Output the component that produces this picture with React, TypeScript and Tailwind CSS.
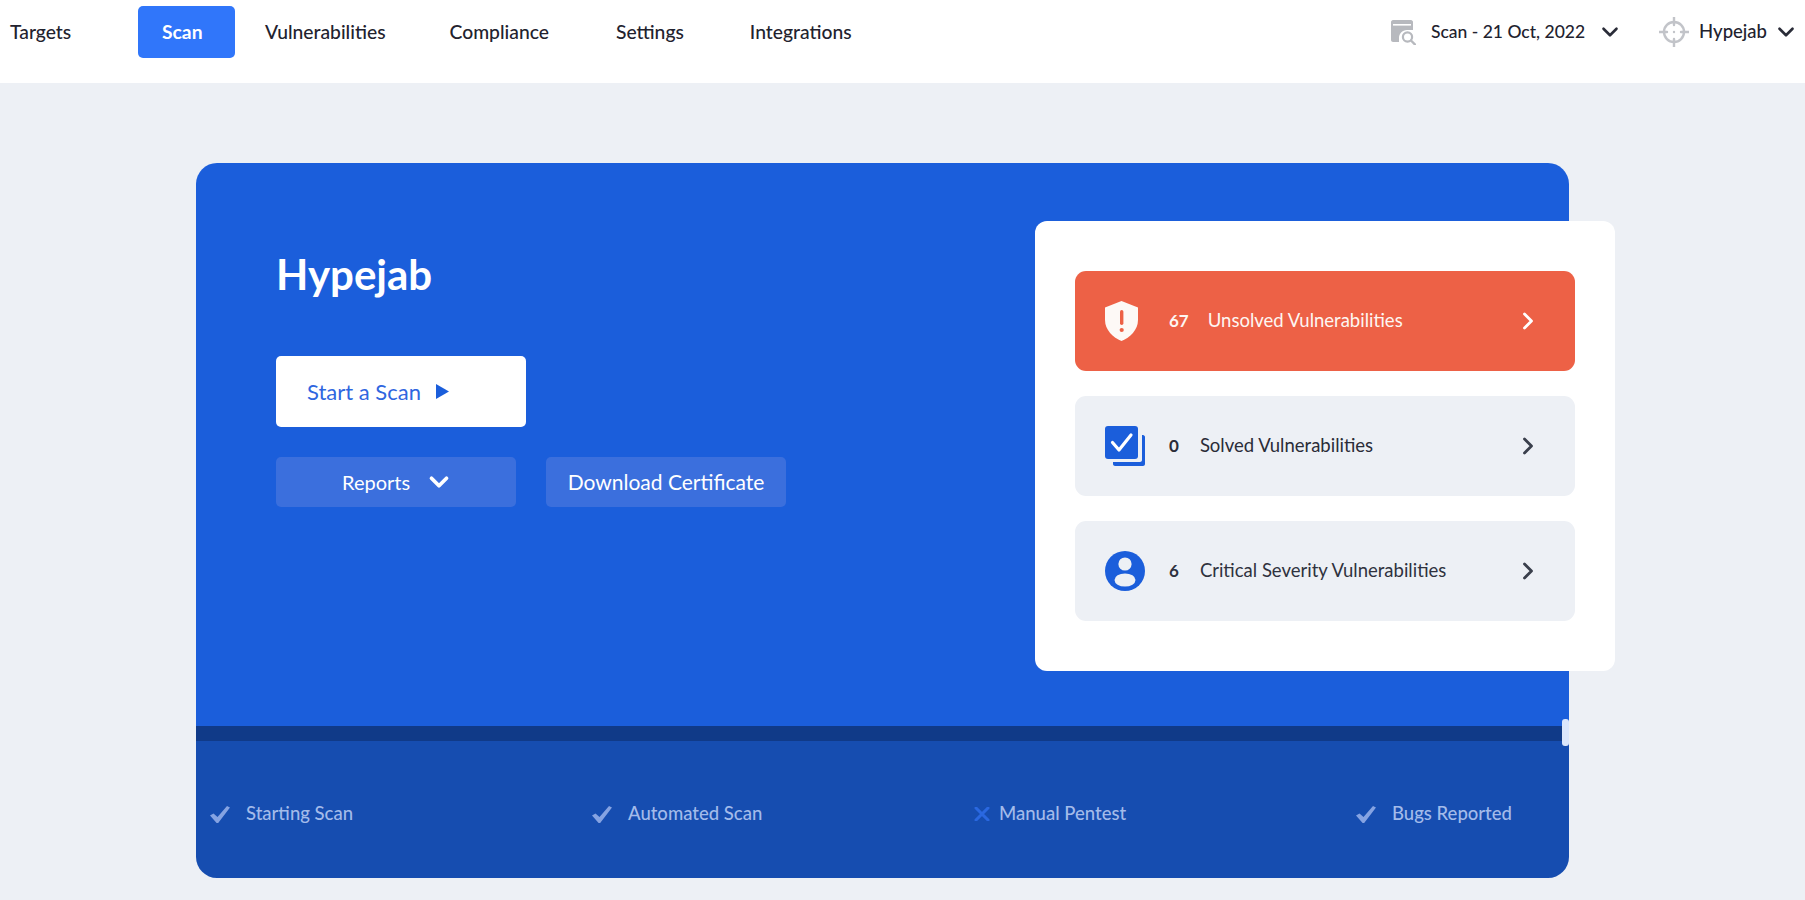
import { ChevronDown, ChevronRight } from "lucide-react";

const font = { fontFamily: "Lato, sans-serif" };

function ShieldIcon() {
    return (
        <svg width="33" height="40" viewBox="0 0 33 40" className="shrink-0">
            <path d="M16.5 0 L33 6.5 V19 C33 29 25 36.5 16.5 40 C8 36.5 0 29 0 19 V6.5 Z" fill="#fdf9f6" />
            <rect x="15" y="9" width="3.4" height="15" rx="1.7" fill="#ed6146" />
            <circle cx="16.7" cy="29" r="2.1" fill="#ed6146" />
        </svg>
    );
}

function SolvedIcon() {
    return (
        <svg width="40" height="40" viewBox="0 0 40 40" className="shrink-0">
            <path d="M37 9 V34 C37 35 36 36 35 36 H8 V38 C8 39 9 40 10 40 H38 C39 40 40 39 40 38 V11 C40 10 39 9 38 9 Z" fill="#1b5edb" />
            <rect x="0" y="0" width="33" height="33" rx="3" fill="#1b5edb" />
            <path d="M7.5 16.5 L14 24 L26 9" fill="none" stroke="#fff" strokeWidth="3.2" strokeLinecap="round" strokeLinejoin="round" />
        </svg>
    );
}

function PersonIcon() {
    return (
        <svg width="40" height="40" viewBox="0 0 40 40" className="shrink-0">
            <circle cx="20" cy="20" r="20" fill="#1b5edb" />
            <circle cx="20" cy="13" r="6.6" fill="#edf0f5" />
            <ellipse cx="20" cy="29" rx="10.5" ry="6.6" fill="#edf0f5" />
        </svg>
    );
}

function ScanDateIcon() {
    return (
        <svg width="25" height="25" viewBox="0 0 25 25" className="shrink-0">
            <path d="M2 0 H20 C21 0 22 1 22 2 V10 H16 C11 10 8 14 8 18 V22 H2 C1 22 0 21 0 20 V2 C0 1 1 0 2 0 Z" fill="#b7b9be" />
            <rect x="2" y="4" width="18" height="1.6" fill="#fff" />
            <circle cx="16.5" cy="17" r="4.6" fill="none" stroke="#b7b9be" strokeWidth="2.2" />
            <path d="M20 20.5 L24 24.5" stroke="#b7b9be" strokeWidth="2.4" strokeLinecap="round" />
        </svg>
    );
}

function TargetIcon() {
    return (
        <svg width="30" height="30" viewBox="0 0 30 30" className="shrink-0" fill="none" stroke="#c2c4c9" strokeWidth="2.4">
            <circle cx="15" cy="15" r="10" />
            <path d="M15 0 V8 M15 22 V30 M0 15 H8 M22 15 H30" strokeLinecap="round" />
            <circle cx="15" cy="15" r="1.2" fill="#c2c4c9" stroke="none" />
        </svg>
    );
}

function StepCheck() {
    return (
        <svg width="20" height="17" viewBox="0 0 20 17" className="shrink-0">
            <path d="M0 9.5 L3.5 7.5 L7.5 11 L17 0 L20 1.5 L8.2 17 L6.6 17 Z" fill="#85a3e2" />
        </svg>
    );
}

function StepCross() {
    return (
        <svg width="16" height="14" viewBox="0 0 16 14" className="shrink-0">
            <path d="M2 1 L14 13 M14 1 L2 13" stroke="#2a68e0" strokeWidth="3" strokeLinecap="round" fill="none" />
        </svg>
    );
}

const rows = [
    { count: "67", label: "Unsolved Vulnerabilities", gap: "ml-[19px]", icon: <ShieldIcon />, box: "bg-[#ed6146] text-[#fdf6f2]", chevron: "text-white" },
    { count: "0", label: "Solved Vulnerabilities", gap: "ml-[21px]", icon: <SolvedIcon />, box: "bg-[#edf0f5] text-[#2a2c38]", chevron: "text-[#3a3f4c]" },
    { count: "6", label: "Critical Severity Vulnerabilities", gap: "ml-[21px]", icon: <PersonIcon />, box: "bg-[#edf0f5] text-[#2f323e]", chevron: "text-[#3a3f4c]" },
];

const steps = [
    { label: "Starting Scan", done: true },
    { label: "Automated Scan", done: true },
    { label: "Manual Pentest", done: false },
    { label: "Bugs Reported", done: true },
];

export default function App() {
    return (
        <div style={font} className="min-h-screen bg-[#edf0f5] pb-[22px]">
            {/* Header */}
            <header className="h-[83px] bg-white flex items-center text-[19.3px] font-medium text-[#22222e] pl-[10px] pr-[6px] pb-[19px]">
                <a className="w-[62px]">Targets</a>
                <a className="ml-[66px] w-[97px] h-[52px] rounded-[5px] bg-[#3076fa] text-white font-bold flex items-center pl-[24px]">Scan</a>
                <a className="ml-[30px]">Vulnerabilities</a>
                <a className="ml-[64px]">Compliance</a>
                <a className="ml-[67px]">Settings</a>
                <a className="ml-[66px]">Integrations</a>
                <div className="ml-auto flex items-center">
                    <ScanDateIcon />
                    <span className="ml-[15px] text-[17.5px]">Scan - 21 Oct, 2022</span>
                    <ChevronDown className="ml-[12px] text-[#2a2c38]" size={26} strokeWidth={2.4} />
                    <div className="ml-[36px]"><TargetIcon /></div>
                    <span className="ml-[10px] text-[18.5px]">Hypejab</span>
                    <ChevronDown className="ml-[6px] text-[#2a2c38]" size={26} strokeWidth={2.4} />
                </div>
            </header>

            {/* Main card */}
            <main className="pt-[80px] pl-[196px]">
                <div className="relative w-[1373px] h-[715px] flex flex-col">
                    <section className="h-[563px] bg-[#1b5edb] rounded-t-[21px] pl-[80px] pt-[89px]">
                        <h1 className="text-[42px] leading-[44px] font-bold text-white">Hypejab</h1>
                        <button className="mt-[60px] w-[250px] h-[71px] bg-white rounded-[5px] flex items-center pl-[31px] text-[22px] text-[#2f66e0]">
                            Start a Scan
                            <svg width="13" height="15" viewBox="0 0 13 15" className="ml-[15px]"><path d="M0 0 L13 7.5 L0 15 Z" fill="#1b5edb" /></svg>
                        </button>
                        <div className="mt-[30px] flex gap-[30px] text-[20px] text-white">
                            <button className="w-[240px] h-[50px] bg-[#3b6fdd] rounded-[5px] flex items-center pl-[66px]">
                                Reports
                                <ChevronDown className="ml-[14px]" size={30} strokeWidth={3} />
                            </button>
                            <button className="w-[240px] h-[50px] bg-[#3b6fdd] rounded-[5px] flex items-center justify-center text-[21px]">Download Certificate</button>
                        </div>
                    </section>

                    {/* Progress bar */}
                    <div className="h-[15px] bg-[#103a88]" />

                    {/* Steps */}
                    <section className="h-[137px] bg-[#164db0] rounded-b-[21px] flex items-center pl-[14px] pt-[9px] text-[18.5px] font-medium text-[#a3bbea]">
                        {steps.map((step) => (
                            <div key={step.label} className="w-[382px] shrink-0 flex items-center">
                                {step.done ? <StepCheck /> : <StepCross />}
                                <span className={step.done ? "ml-[16px]" : "ml-[9px]"}>{step.label}</span>
                            </div>
                        ))}
                    </section>

                    {/* Progress handle */}
                    <div className="absolute top-[556px] right-0 w-[7px] h-[27px] rounded-[3px] bg-[#dbe6fb]" />

                    {/* Vulnerability panel */}
                    <aside className="absolute top-[58px] right-[-46px] w-[580px] h-[450px] bg-white rounded-[12px] py-[50px] px-[40px] flex flex-col gap-[25px]">
                        {rows.map((row) => (
                            <div key={row.label} className={`h-[100px] rounded-[11px] flex items-center pl-[30px] pr-[33px] text-[18.5px] ${row.box}`}>
                                <div className="w-[64px] shrink-0">{row.icon}</div>
                                <span className="font-bold text-[17px]">{row.count}</span>
                                <span className={row.gap}>{row.label}</span>
                                <ChevronRight className={`ml-auto ${row.chevron}`} size={28} strokeWidth={2.4} />
                            </div>
                        ))}
                    </aside>
                </div>
            </main>
        </div>
    );
}
